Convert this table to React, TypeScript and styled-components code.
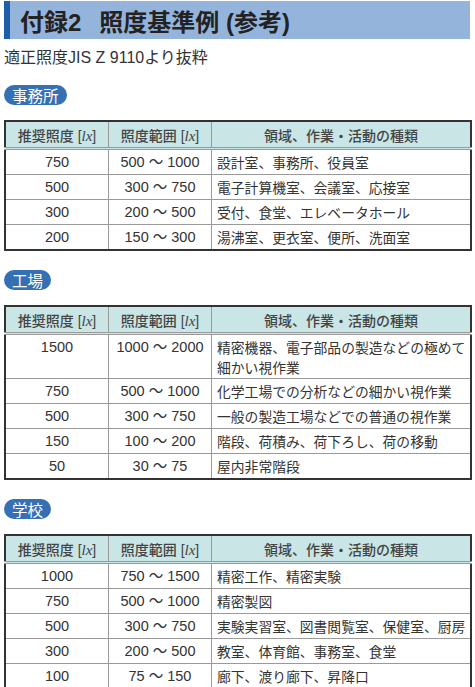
import React from "react";
import styled, { createGlobalStyle } from "styled-components";

const GlobalStyle = createGlobalStyle`
  html, body {
    margin: 0;
    padding: 0;
    background: #ffffff;
  }
  body {
    font-family: "Liberation Sans", "Noto Sans CJK JP", sans-serif;
    color: #333333;
  }
`;

const Page = styled.div`
  width: 475px;
  padding: 1px 4px 0 4px;
  box-sizing: border-box;
`;

const TitleBar = styled.h1`
  margin: 0;
  height: 38px;
  width: 466px;
  box-sizing: border-box;
  background: #95b4dc;
  border-left: 6px solid #1f5ea8;
  padding-left: 10px;
  display: flex;
  align-items: center;
  font-family: "Liberation Sans", "Noto Sans CJK JP", sans-serif;
  font-size: 24px;
  font-weight: 700;
  color: #222222;
`;

const TitleGap = styled.span`
  display: inline-block;
  width: 18px;
`;

const Subtitle = styled.p`
  margin: 9px 0 0 0;
  font-size: 16px;
  line-height: 20px;
  color: #333333;
`;

const Section = styled.section`
  margin-top: 17px;
  display: flex;
  flex-direction: column;
  align-items: flex-start;

  & + & {
    margin-top: 19px;
  }
`;

const Badge = styled.div`
  height: 20px;
  line-height: 20px;
  padding: 0 8px;
  border-radius: 10px;
  background: #3570b5;
  color: #ffffff;
  font-size: 15.5px;
  font-family: "Noto Sans CJK JP", sans-serif;
`;

const Table = styled.table`
  margin-top: 15px;
  width: 468px;
  border-collapse: collapse;
  border: 2px solid #333333;
  table-layout: fixed;
`;

const HeadCell = styled.th<{ $w?: number }>`
  width: ${(p) => (p.$w ? `${p.$w}px` : "auto")};
  height: 25px;
  padding: 0;
  background: #c9e5e6;
  border: 1px solid #9a9a9a;
  border-bottom: 3px double #9a9a9a;
  font-size: 14px;
  font-weight: 500;
  color: #444444;
  text-align: center;
  font-family: "Liberation Sans", "Noto Sans CJK JP", sans-serif;
`;

const Unit = styled.i`
  font-family: "Liberation Serif", serif;
  font-size: 15px;
  font-style: italic;
`;

const Cell = styled.td<{ $left?: boolean }>`
  height: 21px;
  padding: 2px ${(p) => (p.$left ? "1px 1px 5px" : "0 1px 0")};
  border: 1px solid #9a9a9a;
  font-size: ${(p) => (p.$left ? "13.8px" : "14.5px")};
  line-height: 20px;
  white-space: nowrap;
  overflow: hidden;
  text-align: ${(p) => (p.$left ? "left" : "center")};
  vertical-align: top;
  color: #333333;
  font-family: ${(p) =>
    p.$left
      ? `"Noto Sans CJK JP", sans-serif`
      : `"Liberation Sans", "Noto Sans CJK JP", sans-serif`};
`;

type Row = [string, string, React.ReactNode];

const office: Row[] = [
  ["750", "500 〜 1000", "設計室、事務所、役員室"],
  ["500", "300 〜 750", "電子計算機室、会議室、応接室"],
  ["300", "200 〜 500", "受付、食堂、エレベータホール"],
  ["200", "150 〜 300", "湯沸室、更衣室、便所、洗面室"],
];

const factory: Row[] = [
  [
    "1500",
    "1000 〜 2000",
    <>
      精密機器、電子部品の製造などの極めて
      <br />
      細かい視作業
    </>,
  ],
  ["750", "500 〜 1000", "化学工場での分析などの細かい視作業"],
  ["500", "300 〜 750", "一般の製造工場などでの普通の視作業"],
  ["150", "100 〜 200", "階段、荷積み、荷下ろし、荷の移動"],
  ["50", "30 〜 75", "屋内非常階段"],
];

const school: Row[] = [
  ["1000", "750 〜 1500", "精密工作、精密実験"],
  ["750", "500 〜 1000", "精密製図"],
  ["500", "300 〜 750", "実験実習室、図書閲覧室、保健室、厨房"],
  ["300", "200 〜 500", "教室、体育館、事務室、食堂"],
  ["100", "75 〜 150", "廊下、渡り廊下、昇降口"],
];

function LuxTable({ rows }: { rows: Row[] }) {
  return (
    <Table>
      <thead>
        <tr>
          <HeadCell $w={102}>
            推奨照度 [<Unit>lx</Unit>]
          </HeadCell>
          <HeadCell $w={102}>
            照度範囲 [<Unit>lx</Unit>]
          </HeadCell>
          <HeadCell>領域、作業・活動の種類</HeadCell>
        </tr>
      </thead>
      <tbody>
        {rows.map((r, i) => (
          <tr key={i}>
            <Cell>{r[0]}</Cell>
            <Cell>{r[1]}</Cell>
            <Cell $left>{r[2]}</Cell>
          </tr>
        ))}
      </tbody>
    </Table>
  );
}

export default function App() {
  return (
    <Page>
      <GlobalStyle />
      <TitleBar>
        付録2<TitleGap />照度基準例 (参考)
      </TitleBar>
      <Subtitle>適正照度JIS Z 9110より抜粋</Subtitle>
      <Section>
        <Badge>事務所</Badge>
        <LuxTable rows={office} />
      </Section>
      <Section>
        <Badge>工場</Badge>
        <LuxTable rows={factory} />
      </Section>
      <Section>
        <Badge>学校</Badge>
        <LuxTable rows={school} />
      </Section>
    </Page>
  );
}
